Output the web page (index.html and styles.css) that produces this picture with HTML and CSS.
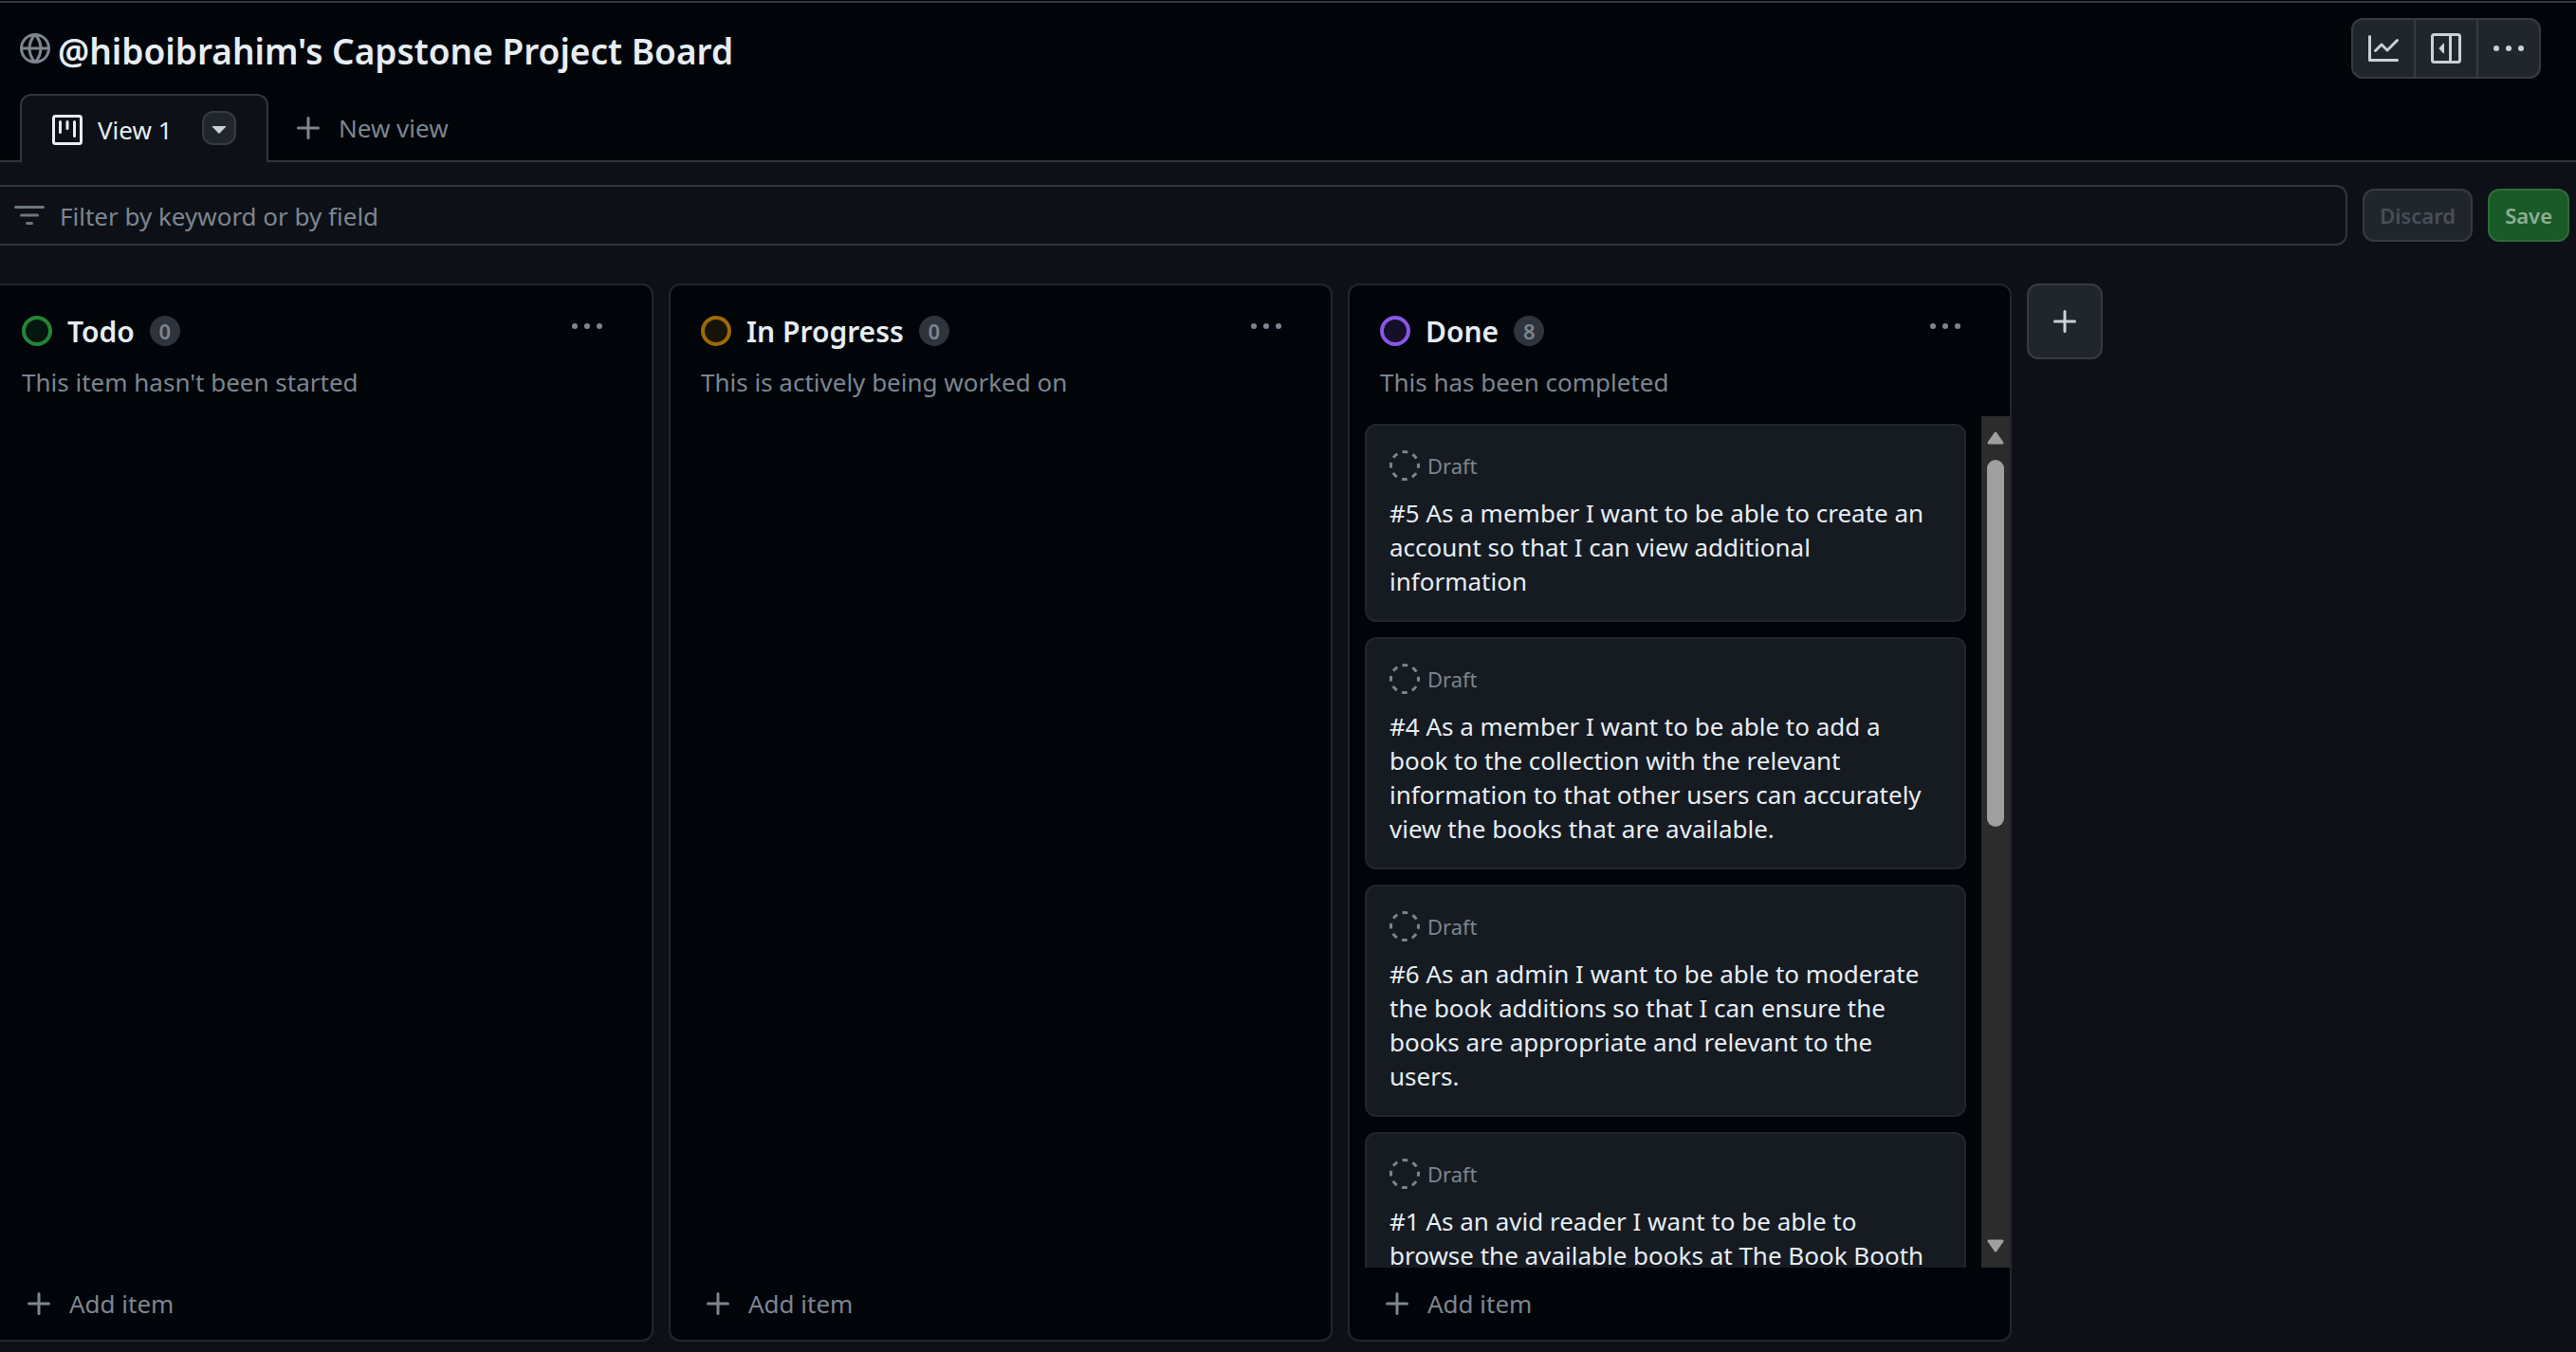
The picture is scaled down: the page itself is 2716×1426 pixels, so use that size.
FILE: index.html
```html
<!DOCTYPE html>
<html lang="en">
<head>
<meta charset="utf-8">
<title>@hiboibrahim's Capstone Project Board</title>
<link rel="stylesheet" href="styles.css">
</head>
<body>
<svg class="sprite" aria-hidden="true">
  <symbol id="plus" viewBox="0 0 16 16"><path d="M8 2.75v10.5M2.75 8h10.5" fill="none" stroke="currentColor" stroke-width="1.5" stroke-linecap="round"/></symbol>
  <symbol id="dots" viewBox="0 0 16 16"><circle cx="1.5" cy="8" r="1.5"/><circle cx="8" cy="8" r="1.5"/><circle cx="14.5" cy="8" r="1.5"/></symbol>
  <symbol id="draft" viewBox="0 0 16 16"><circle cx="8" cy="8" r="7.25" fill="none" stroke="currentColor" stroke-width="1.5" stroke-dasharray="2.9 2.794" stroke-dashoffset="1.45"/></symbol>
  <symbol id="status" viewBox="0 0 16 16"><circle cx="8" cy="8" r="7" fill="currentColor" fill-opacity=".15" stroke="currentColor" stroke-width="2"/></symbol>
</svg>

<header class="header">
  <div class="title-row">
    <svg class="icon muted" viewBox="0 0 16 16" aria-hidden="true"><path d="M8 0a8 8 0 1 1 0 16A8 8 0 0 1 8 0ZM5.78 8.75a9.64 9.64 0 0 0 1.363 4.177c.255.426.542.832.857 1.215.245-.296.551-.705.857-1.215A9.64 9.64 0 0 0 10.22 8.75Zm4.44-1.5a9.64 9.64 0 0 0-1.363-4.177c-.307-.51-.612-.919-.857-1.215a9.927 9.927 0 0 0-.857 1.215A9.64 9.64 0 0 0 5.78 7.25Zm-5.944 1.5H1.543a6.507 6.507 0 0 0 4.666 5.5c-.123-.181-.24-.365-.352-.552-.715-1.192-1.437-2.874-1.581-4.948Zm-2.733-1.5h2.733c.144-2.074.866-3.756 1.58-4.948.12-.197.237-.381.353-.552a6.507 6.507 0 0 0-4.666 5.5Zm10.181 1.5c-.144 2.074-.866 3.756-1.58 4.948-.12.197-.237.381-.353.552a6.507 6.507 0 0 0 4.666-5.5Zm2.733-1.5a6.507 6.507 0 0 0-4.666-5.5c.123.181.24.365.353.552.714 1.192 1.436 2.874 1.58 4.948Z"/></svg>
    <h1 class="title">@hiboibrahim's Capstone Project Board</h1>
    <div class="button-group">
      <button class="group-button" aria-label="Insights"><svg class="icon" viewBox="0 0 16 16"><path d="M1.5 1.75V13.5h13.75a.75.75 0 0 1 0 1.5H.75a.75.75 0 0 1-.75-.75V1.75a.75.75 0 0 1 1.5 0Zm14.28 2.53-5.25 5.25a.75.75 0 0 1-1.06 0L7 7.06 4.28 9.78a.75.75 0 0 1-1.06-1.06l3.25-3.25a.75.75 0 0 1 1.06 0L10 7.94l4.72-4.72a.75.75 0 0 1 1.06 1.06Z"/></svg></button>
      <button class="group-button" aria-label="Project details"><svg class="icon" viewBox="0 0 16 16"><rect x=".75" y=".75" width="14.5" height="14.5" rx="1" fill="none" stroke="currentColor" stroke-width="1.5"/><path d="M9.5 1H11v14H9.5ZM7 5.6v4.8a.25.25 0 0 1-.43.18L4.3 8.2a.25.25 0 0 1 0-.36l2.27-2.42A.25.25 0 0 1 7 5.6Z"/></svg></button>
      <button class="group-button" aria-label="More options"><svg class="icon"><use href="#dots"/></svg></button>
    </div>
  </div>
  <nav class="tabs" aria-label="Views">
    <div class="tab">
      <a class="tab-link" href="#view-1">
        <svg class="icon" viewBox="0 0 16 16" aria-hidden="true"><g fill="none" stroke="currentColor" stroke-width="1.5"><rect x=".75" y=".75" width="14.5" height="14.5" rx="1"/><path d="M4.25 3.75v5.5M8 3.75v3.5M11.75 3.75v7.5" stroke-linecap="round"/></g></svg>
        View 1
      </a>
      <button class="tab-menu" aria-label="View options"><svg class="icon" viewBox="0 0 16 16"><path d="m4.427 7.427 3.396 3.396a.25.25 0 0 0 .354 0l3.396-3.396A.25.25 0 0 0 11.396 7H4.604a.25.25 0 0 0-.177.427Z"/></svg></button>
    </div>
    <button class="new-view"><svg class="icon" aria-hidden="true"><use href="#plus"/></svg>New view</button>
  </nav>
</header>

<main class="main" id="view-1">
  <div class="toolbar">
    <label class="filter">
      <svg class="icon" viewBox="0 0 16 16" aria-hidden="true"><path d="M.75 3.75h14.5M3.75 8h8.5M6.75 12.25h2.5" fill="none" stroke="currentColor" stroke-width="1.5" stroke-linecap="round"/></svg>
      <input class="filter-input" type="text" aria-label="Filter by keyword or by field" placeholder="Filter by keyword or by field">
    </label>
    <button class="button" disabled>Discard</button>
    <button class="button button-save">Save</button>
  </div>

  <div class="board">
    <section class="column">
      <div class="column-head">
        <svg class="icon green" aria-hidden="true"><use href="#status"/></svg>
        <h2 class="column-title">Todo</h2>
        <span class="counter">0</span>
        <button class="column-menu" aria-label="Todo options"><svg class="icon"><use href="#dots"/></svg></button>
      </div>
      <p class="description">This item hasn't been started</p>
      <div class="list"></div>
      <button class="add-item"><svg class="icon" aria-hidden="true"><use href="#plus"/></svg>Add item</button>
    </section>

    <section class="column">
      <div class="column-head">
        <svg class="icon yellow" aria-hidden="true"><use href="#status"/></svg>
        <h2 class="column-title">In Progress</h2>
        <span class="counter">0</span>
        <button class="column-menu" aria-label="In Progress options"><svg class="icon"><use href="#dots"/></svg></button>
      </div>
      <p class="description">This is actively being worked on</p>
      <div class="list"></div>
      <button class="add-item"><svg class="icon" aria-hidden="true"><use href="#plus"/></svg>Add item</button>
    </section>

    <section class="column">
      <div class="column-head">
        <svg class="icon purple" aria-hidden="true"><use href="#status"/></svg>
        <h2 class="column-title">Done</h2>
        <span class="counter">8</span>
        <button class="column-menu" aria-label="Done options"><svg class="icon"><use href="#dots"/></svg></button>
      </div>
      <p class="description">This has been completed</p>
      <div class="list">
        <div class="cards">
          <article class="card">
            <div class="card-kind"><svg class="icon" aria-hidden="true"><use href="#draft"/></svg>Draft</div>
            <h3 class="card-title">#5 As a member I want to be able to create an account so that I can view additional information</h3>
          </article>
          <article class="card">
            <div class="card-kind"><svg class="icon" aria-hidden="true"><use href="#draft"/></svg>Draft</div>
            <h3 class="card-title">#4 As a member I want to be able to add a book to the collection with the relevant information to that other users can accurately view the books that are available.</h3>
          </article>
          <article class="card">
            <div class="card-kind"><svg class="icon" aria-hidden="true"><use href="#draft"/></svg>Draft</div>
            <h3 class="card-title">#6 As an admin I want to be able to moderate the book additions so that I can ensure the books are appropriate and relevant to the users.</h3>
          </article>
          <article class="card">
            <div class="card-kind"><svg class="icon" aria-hidden="true"><use href="#draft"/></svg>Draft</div>
            <h3 class="card-title">#1 As an avid reader I want to be able to browse the available books at The Book Booth</h3>
          </article>
        </div>
        <div class="scrollbar" aria-hidden="true">
          <svg class="arrow" viewBox="0 0 18 14"><path d="M9 2 16 12H2Z"/></svg>
          <div class="track"><div class="thumb"></div></div>
          <svg class="arrow" viewBox="0 0 18 14"><path d="M9 12 2 2H16Z"/></svg>
        </div>
      </div>
      <button class="add-item"><svg class="icon" aria-hidden="true"><use href="#plus"/></svg>Add item</button>
    </section>

    <button class="add-column" aria-label="Add column"><svg class="icon"><use href="#plus"/></svg></button>
  </div>
</main>
</body>
</html>
```
FILE: styles.css
```css
* {
  box-sizing: border-box;
}

body {
  --canvas: #0d1117;
  --inset: #010409;
  --border: #30363d;
  --border-muted: #21262d;
  --control: #21262d;
  --control-border: #363b42;
  --text: #e6edf3;
  --muted: #7d8590;
  display: flex;
  flex-direction: column;
  height: 100vh;
  margin: 0;
  padding-top: 1px;
  overflow: hidden;
  background: var(--inset);
  color: var(--text);
  font: 26px/36px "Noto Sans", "Open Sans", sans-serif;
}

h1, h2, h3, p {
  margin: 0;
}

button {
  display: flex;
  align-items: center;
  justify-content: center;
  padding: 0;
  border: 0;
  background: none;
  color: inherit;
  font: inherit;
}

.sprite {
  position: absolute;
  width: 0;
  height: 0;
}

.icon {
  flex: none;
  width: 32px;
  height: 32px;
  fill: currentColor;
}

.muted { color: var(--muted); }
.green { color: #238636; }
.yellow { color: #9e6a03; }
.purple { color: #8957e5; }

.header {
  border-top: 2px solid var(--border);
}

.title-row {
  display: flex;
  align-items: center;
  gap: 8px;
  padding: 16px 37px 16px 21px;
}

.title {
  flex: 1;
  padding-top: 6px;
  font-size: 37px;
  font-weight: 600;
  line-height: 48px;
}

.button-group {
  display: flex;
  border: 2px solid var(--control-border);
  border-radius: 12px;
  background: var(--control);
  color: #c9d1d9;
}

.group-button {
  width: 66px;
  height: 60px;
}

.group-button:first-child {
  width: 64px;
}

.group-button + .group-button {
  border-left: 2px solid var(--control-border);
}

.tabs {
  display: flex;
  height: 72px;
  padding-left: 21px;
  border-bottom: 2px solid var(--border);
}

.tab {
  display: flex;
  justify-content: space-between;
  width: 262px;
  height: 72px;
  padding: 16px 32px 0;
  border: 2px solid var(--border);
  border-bottom: 0;
  border-radius: 12px 12px 0 0;
  background: var(--canvas);
}

.tab-link {
  display: flex;
  align-items: center;
  gap: 16px;
  height: 40px;
  color: var(--text);
  text-decoration: none;
}

.tab-menu {
  width: 36px;
  height: 36px;
  border: 2px solid var(--control-border);
  border-radius: 12px;
  background: var(--control);
  color: #c9d1d9;
}

.new-view {
  gap: 16px;
  padding: 2px 26px 0;
  color: var(--muted);
}

.main {
  display: flex;
  flex: 1;
  flex-direction: column;
  gap: 40px;
  min-height: 0;
  padding: 24px 0 11px;
  background: var(--canvas);
}

.toolbar {
  display: flex;
  align-items: center;
  gap: 16px;
  padding-right: 7px;
}

.filter {
  display: flex;
  flex: 1;
  align-items: center;
  gap: 16px;
  height: 64px;
  padding-left: 15px;
  border: 2px solid var(--border);
  border-left: 0;
  border-radius: 0 12px 12px 0;
  color: #6e7681;
}

.filter-input {
  flex: 1;
  padding: 2px 0 0;
  border: 0;
  outline: 0;
  background: none;
  color: var(--text);
  font: inherit;
}

.filter-input::placeholder {
  color: var(--muted);
  opacity: 1;
}

.button {
  height: 56px;
  padding: 0 16px;
  border: 2px solid var(--control-border);
  border-radius: 12px;
  background: var(--control);
  color: #484f58;
  font-size: 22px;
  font-weight: 600;
}

.button-save {
  border-color: #2f6b3b;
  background: #1a5a29;
  color: #8fae93;
}

.board {
  display: flex;
  flex: 1;
  gap: 16px;
  min-height: 0;
  margin-left: -11px;
}

.column {
  display: flex;
  flex: none;
  flex-direction: column;
  width: 700px;
  border: 2px solid var(--border-muted);
  border-radius: 12px;
  background: var(--inset);
}

.column-head {
  display: flex;
  align-items: center;
  gap: 16px;
  height: 32px;
  margin-top: 32px;
  padding: 0 52px 0 32px;
}

.column-title {
  padding-top: 2px;
  font-size: 30px;
  font-weight: 600;
}

.counter {
  min-width: 32px;
  border-radius: 16px;
  background: #2f333b;
  color: var(--muted);
  font-size: 22px;
  font-weight: 600;
  line-height: 32px;
  text-align: center;
}

.column-menu {
  height: 42px;
  margin: 0 0 10px auto;
  color: var(--muted);
}

.description {
  margin: 20px 32px 18px;
  color: var(--muted);
}

.list {
  display: flex;
  flex: 1;
  min-height: 0;
  overflow: hidden;
}

.cards {
  display: flex;
  flex: 1;
  flex-direction: column;
  gap: 16px;
  padding: 8px 16px;
}

.card {
  flex: none;
  padding: 26px 24px 23px;
  border: 2px solid var(--border-muted);
  border-radius: 12px;
  background: #161b22;
}

.card-kind {
  display: flex;
  align-items: center;
  gap: 8px;
  height: 32px;
  margin-bottom: 16px;
  color: var(--muted);
  font-size: 22px;
}

.card-title {
  font-size: 26px;
  font-weight: 400;
}

.scrollbar {
  display: flex;
  flex-direction: column;
  gap: 16px;
  align-items: center;
  width: 30px;
  padding: 16px 0;
  background: #2c2c2c;
}

.arrow {
  flex: none;
  width: 18px;
  height: 14px;
  fill: #9f9f9f;
  stroke: #9f9f9f;
  stroke-width: 3px;
  stroke-linejoin: round;
}

.track {
  flex: 1;
  width: 18px;
}

.thumb {
  height: 48%;
  border-radius: 9px;
  background: #9f9f9f;
}

.add-item {
  flex: none;
  justify-content: flex-start;
  gap: 16px;
  height: 76px;
  padding: 0 34px;
  color: var(--muted);
}

.add-column {
  flex: none;
  width: 80px;
  height: 80px;
  border: 2px solid var(--control-border);
  border-radius: 12px;
  background: var(--control);
  color: #c9d1d9;
}
```
